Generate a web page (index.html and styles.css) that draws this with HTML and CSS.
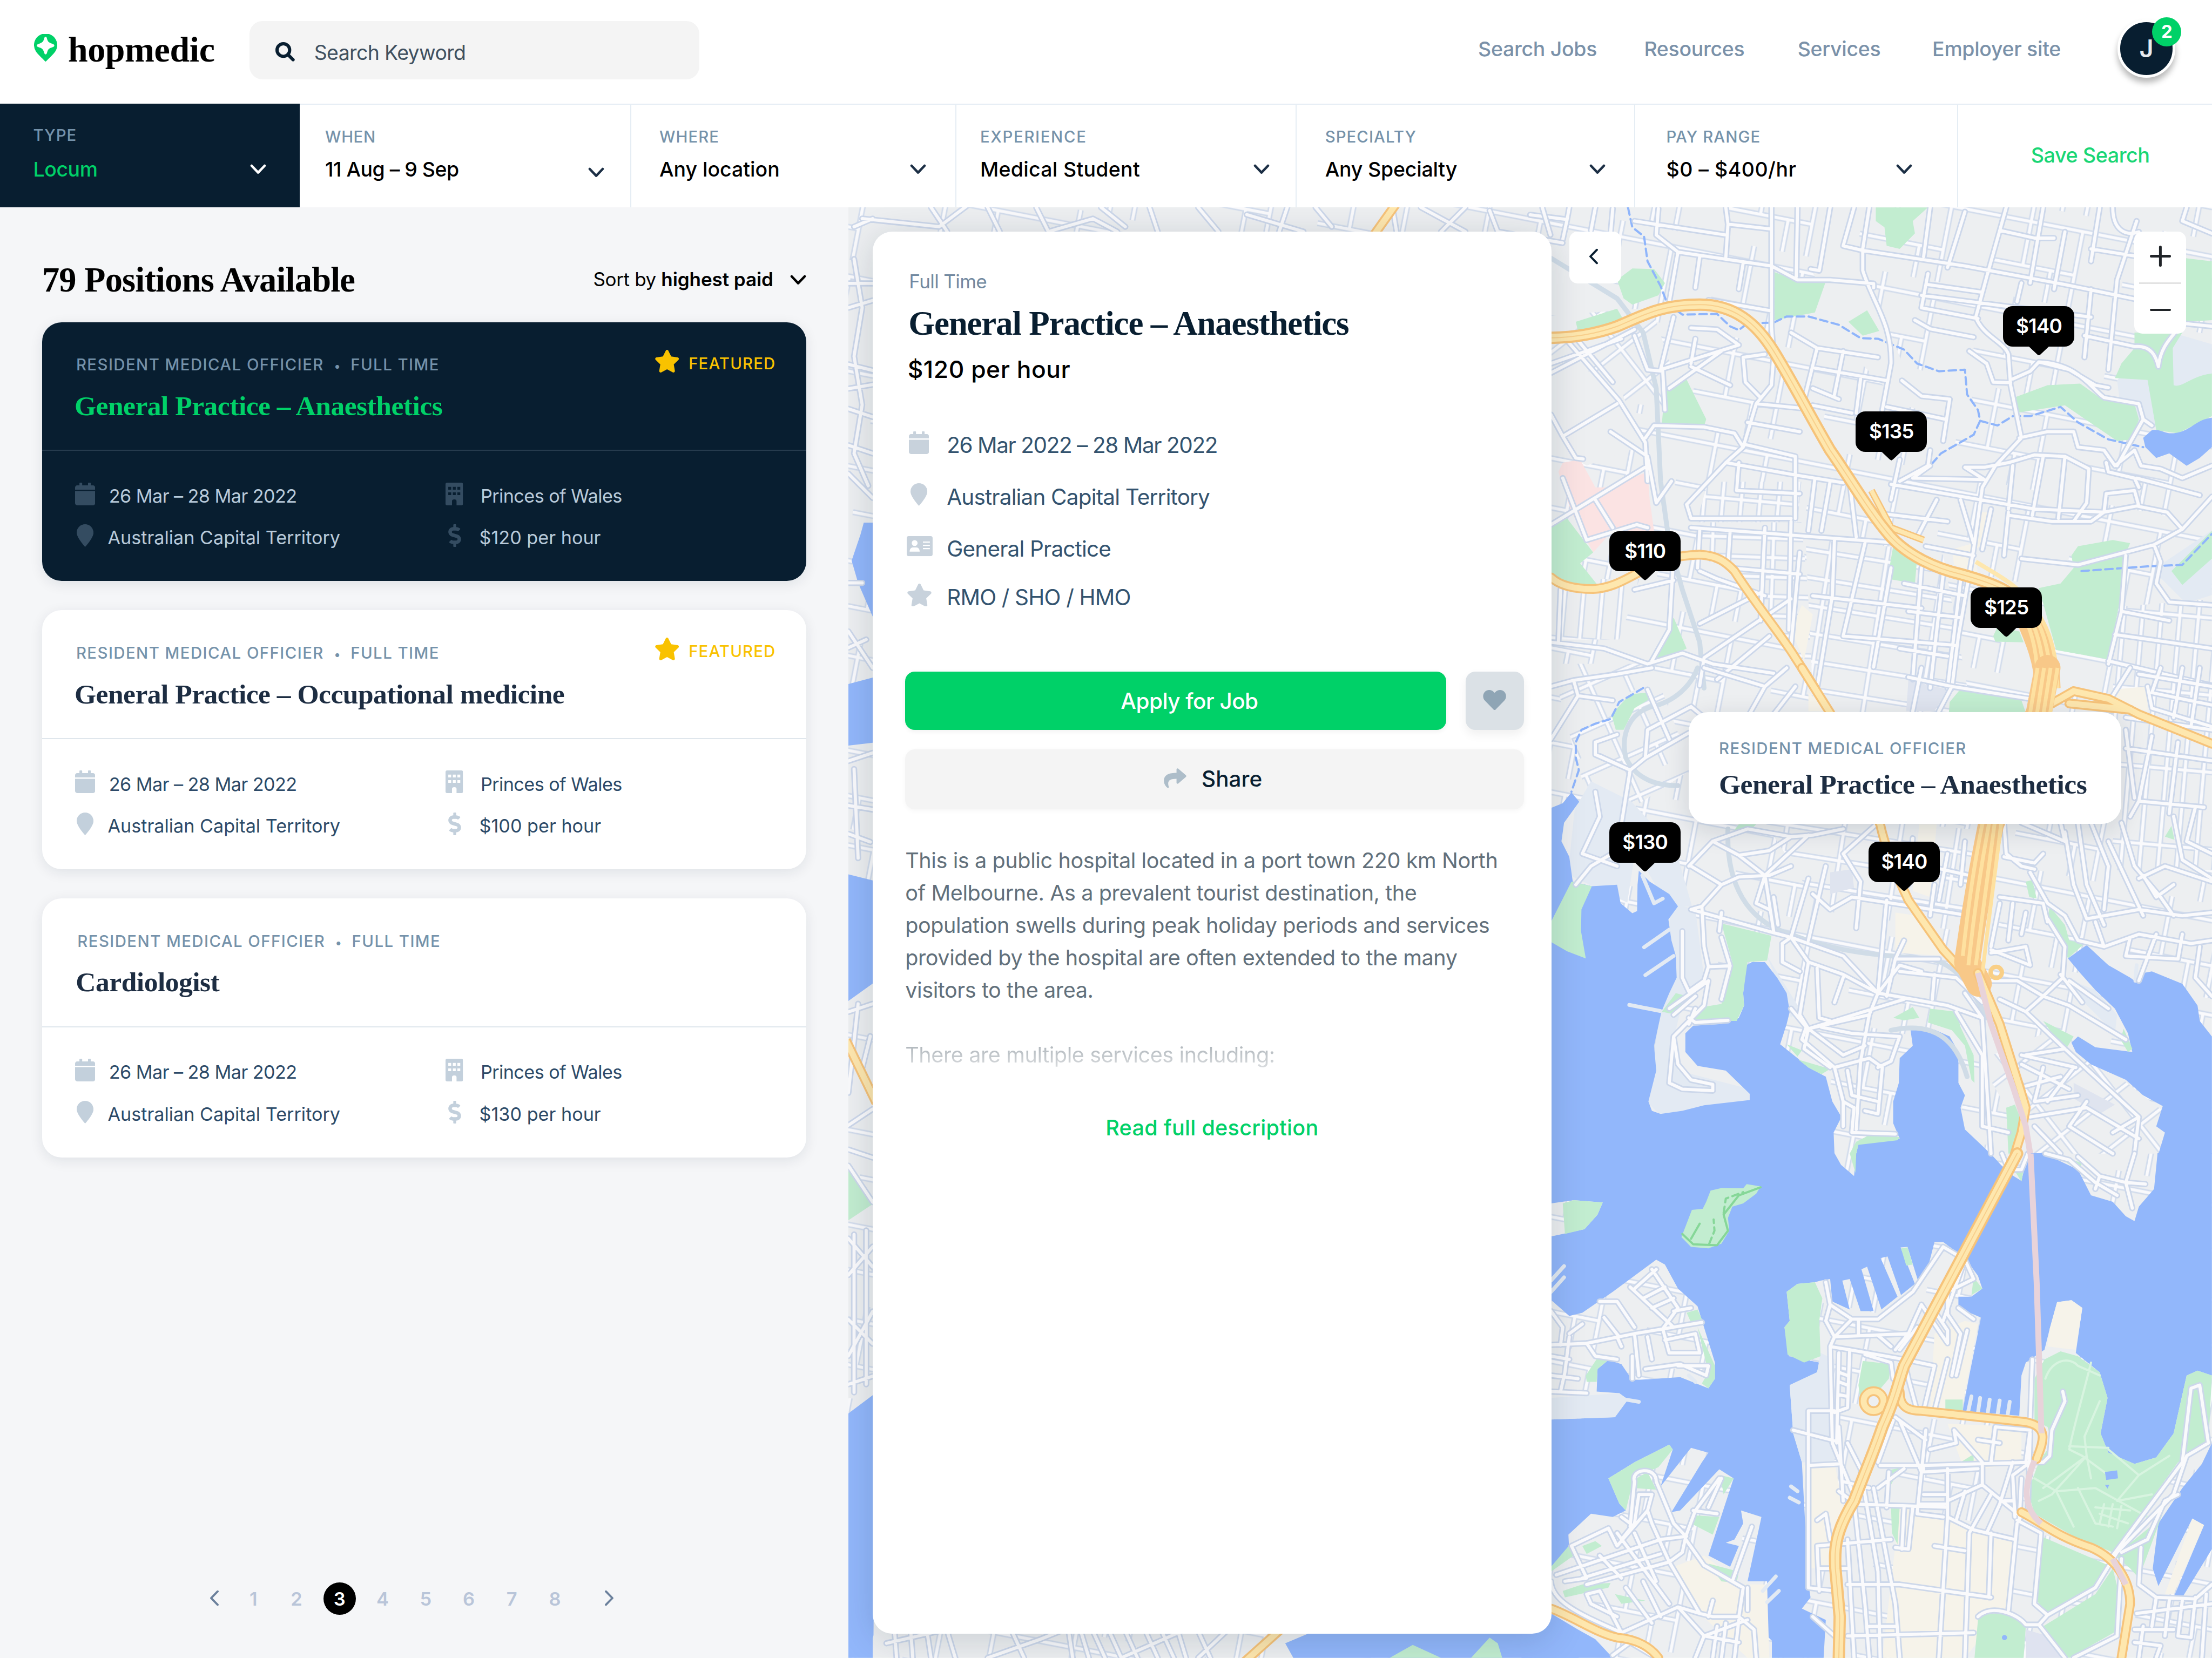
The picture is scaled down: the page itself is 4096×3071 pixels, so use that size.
FILE: index.html
```html
<!DOCTYPE html>
<html lang="en">
<head>
<meta charset="utf-8">
<title>hopmedic – Search Jobs</title>
<link rel="stylesheet" href="styles.css">
</head>
<body>
<svg class="sprite" aria-hidden="true">
  <symbol id="i-chevron" viewBox="0 0 10 6.4"><path d="M1 1l4 4.2L9 1" fill="none" stroke="currentColor" stroke-width="1.5" stroke-linecap="round" stroke-linejoin="round"/></symbol>
  <symbol id="i-left" viewBox="0 0 6 10"><path d="M5 .9L1 5l4 4.1" fill="none" stroke="currentColor" stroke-width="1.3" stroke-linecap="round" stroke-linejoin="round"/></symbol>
  <symbol id="i-right" viewBox="0 0 6 10"><path d="M1 .9L5 5 1 9.1" fill="none" stroke="currentColor" stroke-width="1.3" stroke-linecap="round" stroke-linejoin="round"/></symbol>
  <symbol id="i-calendar" viewBox="0 0 12.4 14"><path d="M0 5.2h12.4v7.5c0 .7-.6 1.3-1.3 1.3H1.3C.6 14 0 13.4 0 12.700zM0 4.300V3c0-.7.6-1.300 1.300-1.300h1.400V.4c0-.2.2-.4.400-.4h.900c.2 0 .4.200.4.400v1.300h3.600V.4c0-.2.2-.4.400-.4h.900c.2 0 .4.200.4.400v1.300h1.400c.7 0 1.300.6 1.300 1.300v1.300z" fill="currentColor"/></symbol>
  <symbol id="i-pin" viewBox="0 0 10.4 14"><path d="M5.200 14C4.700 13.500 0 8.300 0 5.200a5.200 5.200 0 0 1 10.400 0C10.400 8.300 5.700 13.500 5.200 14z" fill="currentColor"/></symbol>
  <symbol id="i-building" viewBox="0 0 10.800 14"><path fill-rule="evenodd" d="M1 0h8.800a1 1 0 0 1 1 1v12a1 1 0 0 1-1 1H6.800v-2.600a1.400 1.100 0 0 0-2.800 0V14H1a1 1 0 0 1-1-1V1a1 1 0 0 1 1-1zM1.700 2.600v1.700h1.800V2.600zm2.800 0v1.700h1.800V2.600zm2.800 0v1.700h1.800V2.600zM1.700 6v1.700h1.800V6zm2.800 0v1.700h1.800V6zm2.800 0v1.700h1.800V6z" fill="currentColor"/></symbol>
  <symbol id="i-dollar" viewBox="0 0 288 512"><path d="M209.2 233.400l-108-31.600C88.700 198.200 80 186.500 80 173.500c0-16.300 13.200-29.500 29.500-29.500h66.300c12.200 0 24.200 3.700 34.200 10.500 6.100 4.100 14.300 3.100 19.500-2l34.800-34c7.100-6.900 6.100-18.400-1.800-24.500C238 74.800 207.400 64.100 176 64V16c0-8.800-7.200-16-16-16h-32c-8.800 0-16 7.200-16 16v48h-2.500C45.800 64-5.400 118.700.5 183.600c4.200 46.100 39.400 83.600 83.800 96.600l102.500 30c12.500 3.700 21.200 15.300 21.200 28.300 0 16.300-13.200 29.500-29.500 29.500h-66.300C100 368 88 364.300 78 357.500c-6.100-4.100-14.300-3.100-19.500 2l-34.800 34c-7.100 6.900-6.100 18.400 1.800 24.500 24.500 19.200 55.100 29.900 86.500 30v48c0 8.800 7.200 16 16 16h32c8.800 0 16-7.200 16-16v-48.200c46.600-.9 90.300-28.600 105.700-72.700 21.500-61.600-14.600-124.800-72.500-141.700z" fill="currentColor"/></symbol>
  <symbol id="i-star" viewBox="20 0 536 512"><path d="M259.300 17.800L194 150.200 47.900 171.500c-26.200 3.800-36.700 36.100-17.700 54.600l105.700 103-25 145.500c-4.500 26.300 23.200 46 46.400 33.700L288 439.600l130.700 68.700c23.200 12.200 50.900-7.400 46.400-33.700l-25-145.500 105.700-103c19-18.500 8.500-50.800-17.700-54.600L382 150.200 316.700 17.800c-11.700-23.600-45.600-23.900-57.400 0z" fill="currentColor"/></symbol>
  <symbol id="i-heart" viewBox="0 32 512 448"><path d="M462.300 62.600C407.500 15.900 326 24.300 275.700 76.200L256 96.500l-19.700-20.300C186.100 24.300 104.500 15.900 49.700 62.600c-62.800 53.600-66.100 149.800-9.900 207.900l193.500 199.800c12.500 12.900 32.800 12.900 45.300 0l193.500-199.800c56.300-58.100 53-154.300-9.800-207.900z" fill="currentColor"/></symbol>
  <symbol id="i-share" viewBox="0 30 512 452"><path d="M503.700 189.800L327.700 37.900C312.300 24.500 288 35.300 288 56v80.100C127.400 137.900 0 170.100 0 322.300c0 61.500 39.600 122.300 83.300 154.200 13.700 9.900 33.100-2.600 28.100-18.700C66.100 312.800 132.900 274.300 288 272.100V360c0 20.700 24.300 31.500 39.700 18.200l176-152c11.100-9.600 11.100-26.800 0-36.400z" fill="currentColor"/></symbol>
  <symbol id="i-card" viewBox="0 0 16 12.400"><path fill-rule="evenodd" d="M1.200 0h13.600A1.200 1.200 0 0 1 16 1.200v10a1.200 1.200 0 0 1-1.200 1.200H1.200A1.200 1.200 0 0 1 0 11.200v-10A1.200 1.200 0 0 1 1.200 0zM4.900 2.500a1.800 1.800 0 1 0 0 3.600 1.800 1.800 0 0 0 0-3.600zM1.800 9.600h6.200c0-1.700-.9-2.600-2-2.600H3.800c-1.100 0-2 .9-2 2.600zM10 3.300v.8h4.300v-.8zm0 2v.8h4.300v-.8zm0 2v.8h4.300v-.8z" fill="currentColor"/></symbol>
  <symbol id="i-search" viewBox="0 0 12 12"><circle cx="4.900" cy="4.900" r="3.900" fill="none" stroke="currentColor" stroke-width="2"/><path d="M7.900 7.900l3 3" stroke="currentColor" stroke-width="2" stroke-linecap="round"/></symbol>
</svg>

<header class="top">
  <a class="brand">
    <svg class="brand-mark" viewBox="0 0 14.300 17.100"><path d="M7.150 17.100C6 15.900 2.300 12.500 1.200 10.800A7.150 7.150 0 1 1 13.100 10.800C12 12.500 8.300 15.900 7.150 17.100z" fill="#00d168"/><path d="M7.150 1.700c.5 0 .6.3.9 1.300.5 1.700 1 2.200 2.700 2.800 1.300.5 1.800.7 1.800 1.300s-.5.900-1.800 1.300c-1.600.5-2.200 1.200-2.600 2.800-.3 1.100-.5 1.400-1 1.400s-.700-.3-1-1.400C5.700 9.600 5.100 8.900 3.600 8.400 2.200 8 1.700 7.700 1.700 7.100s.6-.8 1.900-1.300C5.200 5.200 5.700 4.700 6.200 3c.3-1 .500-1.300.950-1.300z" fill="#fff"/></svg>
    <span class="brand-name">hopmedic</span>
  </a>
  <label class="search"><svg class="search-icon"><use href="#i-search"/></svg><span>Search Keyword</span></label>
  <nav class="nav"><a>Search Jobs</a><a>Resources</a><a>Services</a><a>Employer site</a></nav>
  <div class="avatar">J<span class="badge">2</span></div>
</header>

<section class="filters">
  <div class="filter active"><span class="filter-label">TYPE</span><div class="filter-value"><span>Locum</span><svg class="chev"><use href="#i-chevron"/></svg></div></div>
  <div class="filter when"><span class="filter-label">WHEN</span><div class="filter-value"><span>11 Aug – 9 Sep</span><svg class="chev"><use href="#i-chevron"/></svg></div></div>
  <div class="filter where"><span class="filter-label">WHERE</span><div class="filter-value"><span>Any location</span><svg class="chev"><use href="#i-chevron"/></svg></div></div>
  <div class="filter exp"><span class="filter-label">EXPERIENCE</span><div class="filter-value"><span>Medical Student</span><svg class="chev"><use href="#i-chevron"/></svg></div></div>
  <div class="filter spec"><span class="filter-label">SPECIALTY</span><div class="filter-value"><span>Any Specialty</span><svg class="chev"><use href="#i-chevron"/></svg></div></div>
  <div class="filter pay"><span class="filter-label">PAY RANGE</span><div class="filter-value"><span>$0 – $400/hr</span><svg class="chev"><use href="#i-chevron"/></svg></div></div>
  <a class="save">Save Search</a>
</section>

<main class="main">
  <section class="results">
    <div class="results-head">
      <h1 class="results-title">79 Positions Available</h1>
      <div class="sort"><span>Sort by <b>highest paid</b></span><svg class="chev"><use href="#i-chevron"/></svg></div>
    </div>

    <article class="job selected">
      <div class="job-top">
        <div class="job-copy"><div class="eyebrow">RESIDENT MEDICAL OFFICIER<i class="dot">•</i>FULL TIME</div><h2 class="job-title">General Practice – Anaesthetics</h2></div>
        <div class="featured"><svg class="ic-star"><use href="#i-star"/></svg><span>FEATURED</span></div>
      </div>
      <div class="job-facts">
        <svg class="ic-cal"><use href="#i-calendar"/></svg><span class="snug">26 Mar – 28 Mar 2022</span>
        <svg class="ic-build"><use href="#i-building"/></svg><span class="snug">Princes of Wales</span>
        <svg class="ic-pin"><use href="#i-pin"/></svg><span class="hang">Australian Capital Territory</span>
        <svg class="ic-dollar"><use href="#i-dollar"/></svg><span class="hang">$120 per hour</span>
      </div>
    </article>

    <article class="job">
      <div class="job-top">
        <div class="job-copy"><div class="eyebrow">RESIDENT MEDICAL OFFICIER<i class="dot">•</i>FULL TIME</div><h2 class="job-title">General Practice – Occupational medicine</h2></div>
        <div class="featured"><svg class="ic-star"><use href="#i-star"/></svg><span>FEATURED</span></div>
      </div>
      <div class="job-facts">
        <svg class="ic-cal"><use href="#i-calendar"/></svg><span class="snug">26 Mar – 28 Mar 2022</span>
        <svg class="ic-build"><use href="#i-building"/></svg><span class="snug">Princes of Wales</span>
        <svg class="ic-pin"><use href="#i-pin"/></svg><span class="hang">Australian Capital Territory</span>
        <svg class="ic-dollar"><use href="#i-dollar"/></svg><span class="hang">$100 per hour</span>
      </div>
    </article>

    <article class="job plain">
      <div class="job-top">
        <div class="job-copy"><div class="eyebrow">RESIDENT MEDICAL OFFICIER<i class="dot">•</i>FULL TIME</div><h2 class="job-title">Cardiologist</h2></div>
      </div>
      <div class="job-facts">
        <svg class="ic-cal"><use href="#i-calendar"/></svg><span class="snug">26 Mar – 28 Mar 2022</span>
        <svg class="ic-build"><use href="#i-building"/></svg><span class="snug">Princes of Wales</span>
        <svg class="ic-pin"><use href="#i-pin"/></svg><span class="hang">Australian Capital Territory</span>
        <svg class="ic-dollar"><use href="#i-dollar"/></svg><span class="hang">$130 per hour</span>
      </div>
    </article>

    <nav class="pages">
      <svg class="pg-arrow"><use href="#i-left"/></svg>
      <span>1</span><span>2</span><span class="current">3</span><span>4</span><span>5</span><span>6</span><span>7</span><span>8</span>
      <svg class="pg-arrow next"><use href="#i-right"/></svg>
    </nav>
  </section>

  <section class="map-area">
    <svg class="map" viewBox="2096 512 3368 3584" preserveAspectRatio="none">
      <defs>
        <pattern id="g-loose" width="330" height="230" patternUnits="userSpaceOnUse" patternTransform="rotate(11)">
          <rect width="330" height="230" fill="#edeff1"/>
          <g class="pc"><path d="M0 40H330M0 150H210M80 0V150M210 40V230M150 150V230"/></g><g class="pr"><path d="M0 40H330M0 150H210M80 0V150M210 40V230M150 150V230"/></g>
        </pattern>
        <pattern id="g-rows" width="150" height="48" patternUnits="userSpaceOnUse" patternTransform="rotate(2)">
          <rect width="150" height="48" fill="#edeff1"/>
          <g class="pc"><path d="M0 24H150M75 0V48"/></g><g class="pr"><path d="M0 24H150M75 0V48"/></g>
        </pattern>
        <pattern id="g-east" width="140" height="68" patternUnits="userSpaceOnUse" patternTransform="rotate(9)">
          <rect width="140" height="68" fill="#edeff1"/>
          <g class="pc"><path d="M0 30H140M60 0V68"/></g><g class="pr"><path d="M0 30H140M60 0V68"/></g>
        </pattern>
        <pattern id="g-cols" width="46" height="190" patternUnits="userSpaceOnUse" patternTransform="rotate(5)">
          <rect width="46" height="190" fill="#edeff1"/>
          <g class="pc"><path d="M23 0V190M0 95H46"/></g><g class="pr"><path d="M23 0V190M0 95H46"/></g>
        </pattern>
        <pattern id="g-diag" width="170" height="100" patternUnits="userSpaceOnUse" patternTransform="rotate(-38)">
          <rect width="170" height="100" fill="#edeff1"/>
          <g class="pc"><path d="M0 45H170M75 0V100"/></g><g class="pr"><path d="M0 45H170M75 0V100"/></g>
        </pattern>
        <pattern id="g-slope" width="190" height="100" patternUnits="userSpaceOnUse" patternTransform="rotate(-24)">
          <rect width="190" height="100" fill="#edeff1"/>
          <g class="pc"><path d="M0 42H190M50 0V100M140 42V100"/></g><g class="pr"><path d="M0 42H190M50 0V100M140 42V100"/></g>
        </pattern>
        <path id="st6" d="M48 685L75 755 105 825 122 828M75 755L200 650M0 40L85 55 90 16M85 55L75 120M150 16L140 90M190 20L185 100M295 20L290 105 340 160 555 205M240 60L450 105M450 16L455 70 550 85M455 70L450 180M555 16L555 400 560 490M340 160L320 320M390 175L380 275M490 195L480 280M410 315L555 350M555 205L615 250 690 250 790 262 790 275M615 16L612 240M690 16L665 220 645 215M745 16L720 140 765 155 1000 205 1230 265 1420 320M780 16L765 150 765 220C790 330 832 390 830 520L810 670M920 16L905 175M1000 30L960 210M1095 16L1050 240M1080 90L1160 115 1205 115M1180 16L1150 260M1230 95L1205 280M1310 16L1290 190M1290 150L1400 175 1450 190M1395 60L1350 250 1330 540M1340 16C1340 90 1370 110 1400 95M1510 16L1500 60 1568 100M915 230L900 340 1030 375M915 265L1040 290M1050 240L1025 370C1040 430 1090 450 1100 490L1105 590 1130 760 1070 850 1040 920 1020 1120 985 1400 970 1568M900 300L1290 370M1130 260L1120 320M1290 280L1275 500M885 380L920 408 1020 435M1275 430L1390 465C1430 460 1440 500 1445 530C1450 460 1480 430 1500 390L1568 400M1010 480L1050 520 1065 580 1105 582M1110 570L1150 545 1170 515 1240 540 1300 590 1330 598M1170 515C1260 520 1290 600 1320 630L1400 650 1410 700 1430 720M1410 700L1350 850M1125 760L1190 740 1250 740 1260 790 1320 800 1345 850 1390 800 1405 850 1450 860 1500 890 1568 850M1045 855L1100 840 1160 815 1230 820 1285 860 1280 970 1250 1030M1180 820L1155 1010M1230 820L1215 1020M1110 850L1100 990M1325 840L1330 870 1390 890 1400 920M1320 1000L1395 980 1465 1000 1500 1055 1568 950M1320 1000L1325 940 1390 930 1400 980M1395 890L1450 910 1540 945M1320 1000L1290 1030 1200 1030 1100 1010M1500 1055L1435 1105 1260 1170 1130 1150M1435 1105L1450 1160 1440 1230 1470 1290 1568 1300M1370 1140L1360 1320 1330 1490M1360 1320L1470 1350M1345 1395L1568 1440M1568 1560L1330 1480M48 1420L170 1440 270 1490 350 1455 420 1490 560 1520M48 1040L270 850M75 890L130 1090M130 1090L245 1040 270 1050M150 960L190 1050M185 740L270 820 290 970 325 900M48 550L240 410M48 520L210 440M75 430L205 640 265 775 270 900M110 445L190 580M240 430L270 540 305 545 310 670M300 540L480 460 430 410 370 405M265 760L285 720 400 725 470 745 490 790 450 840 360 975M320 600L440 480M370 530L460 590M330 370L300 540M380 440L370 520M490 790L520 650 630 665M500 710L620 740M490 780L610 820M540 490L490 500 495 580 530 630M560 500L555 590 520 650M600 420L660 470 800 500M660 470L630 640M720 480L700 620M655 535L820 575M650 600L710 635M760 570L750 680M650 655L740 680M855 575L900 625 965 635 950 770M820 660L955 700M450 840L610 880 720 905M610 820L610 1020M480 840L475 930 620 940M360 975L370 1020 600 1020M370 1050L850 1100M655 890L640 1060M690 900L670 1060M735 905L750 1080M830 910L1160 990 1320 1000M780 1000L960 1030M850 830L830 960M920 800L915 850 850 900M920 850L880 890 1045 895 1000 855 1045 855M935 960L890 1080M990 960L1020 1100M1060 990L1040 1120M1100 1000L1090 1140M910 1110L1020 1140M900 1180L880 1540M950 1200L920 1568M990 1220L960 1568M860 1230L1000 1270M870 1320L990 1340M700 1090L695 1270 660 1568M770 1100L720 1400M830 1180L790 1500M650 1270L900 1310M720 1400L980 1430M850 1440L960 1465M620 1130L600 1430M460 1180L620 1200M390 1060L385 1180M460 1060L455 1170M540 1050L530 1350M600 1030L595 1380M550 1400L430 1540M600 1280L400 1470 390 1560M330 1140L320 1380 280 1480M240 1250L330 1220M390 1190L430 1215 540 1270M70 1250L65 1420M530 1260L390 1360"/>
        <path id="st7" d="M48 60L100 40 110 90 190 105M100 40L200 20 280 0M110 90L48 230M270 70L320 230M160 285L230 330 265 290 365 210M230 330L200 590 140 640 105 700M230 330L150 280 150 240 200 215M265 290L270 200 370 125 400 160M150 400L160 480 120 600 200 640M400 0L540 60 500 160M540 60L590 0M610 60L560 150M365 640L420 560 500 520 600 545 650 540 720 520M420 560L480 605 550 590 600 545M480 605L540 670 640 540M370 640L440 700 480 675 550 670 600 640M440 700L395 770 370 780 560 855 600 870 720 930 800 1050 960 1090 1040 1130M395 770L400 900 410 965 460 962M440 790L435 850M440 870L460 962 440 1070M410 965L400 1010 365 1045 350 1000 350 850M540 670L560 850M540 670L520 760 550 780M560 740L570 830M640 680L600 870M680 640L640 880M600 870L640 950 720 990 800 1050 780 1120 760 1270 750 1490M640 950L620 1120 640 1165 780 1120M720 1000L700 1080M660 970L665 1130 690 1140M580 890L580 950 620 980M600 870L580 890M600 1100L635 1160 625 1200 700 1290 720 1400 745 1420M640 1165L860 1070M640 1165L720 1250 770 1220M670 1160L740 1180 850 1190 830 1270 800 1290M700 1290L780 1260 810 1290 800 1440 770 1430M730 1300L740 1380 800 1400M745 1420L740 1500 840 1505M640 1165L630 1230 690 1290M840 940L820 1060M820 750L800 1050M800 1050L850 960 900 980M850 980L980 1000 1040 1080M930 990L925 1070M740 740L880 770 1010 800M760 690L750 840M650 730L690 780 740 740M800 500L720 600 760 690M860 880L840 940 940 940M915 640L1010 670M930 700L920 800M960 600L940 750M1000 560L990 700M880 550L870 700M1080 740L1180 760 1190 820M1090 500L1095 600 1130 640 1160 650M1130 500L1230 560 1220 500M1090 610L1160 630 1180 600M1150 660L1190 760 1230 800 1260 880 1320 900 1400 860 1520 890 1568 880M1230 530L1250 700 1280 810 1400 780 1500 800 1568 790M1260 500L1280 700 1320 830M1290 500L1330 640 1320 780M1300 820L1320 900M1330 560L1370 680 1410 800M1360 500L1390 640 1450 740 1480 800M1380 480L1400 430 1550 450M1480 480L1500 620 1568 680M1400 680L1460 640 1568 690M1410 670L1440 740 1480 700M1530 450L1510 560 1568 600M1380 870L1370 930 1490 940M1440 860L1400 1010M1490 940L1500 860M1540 900L1530 1000 1568 1060M1190 810L1230 900 1225 1000 1180 1060 1120 1010 1060 1010M1080 1070L1140 1110 1180 1060 1240 1090 1370 1200M1140 1110L1230 1230 1400 1450 1390 1568M1130 1250L1255 1290M1130 1280L1240 1360M1140 1350L1220 1320M1230 1230L1140 1250M1180 1290L1160 1400 1260 1380M1250 1290L1190 1400M1150 1450L1280 1420 1400 1520M1280 1400L1240 1480 1340 1568M1160 1480L1220 1568M1400 1450L1340 1500M1060 920L1140 900 1150 960 1060 910M1080 760L1060 900M1110 760L1100 880M1140 790L1130 860M1220 990L1270 1080M1240 1010L1330 1100M320 1100L410 1010 400 1090 330 1190 320 1340 350 1360 420 1365 420 1345 370 1330 340 1280 330 1190M380 1060L330 1120M365 1150L380 1100M365 1130L380 1145 455 1138M1000 1050L1040 1130 1060 1568M980 1110L1040 1250 1040 1480 1100 1500M1370 160L1568 200M1380 0L1340 90M1420 60L1430 130 1568 190M1450 0L1430 80 1568 120M1500 0L1480 160M1540 0L1520 190M1568 60L1400 20M1370 260L1568 300M1370 200L1390 420M1430 220L1400 430M1490 240L1470 470M720 1400L720 1480M900 0L880 140M970 60L940 140M870 30L970 60 1150 100"/>
        <path id="st8" d="M48 595L130 590 240 560 395 525M240 560L250 690M160 460L200 460 240 540M230 415L330 540 305 545 340 480 300 400 280 360M240 420L290 360M260 450L310 415M280 480L330 450M305 545L320 620 390 620 380 560 310 580M330 490L370 480M130 590L150 630 200 640M90 570L80 680 70 740M48 630L90 640M48 690L110 700M48 740L130 745M270 570L280 640M265 670L345 655 405 690M405 690L410 660 340 660M200 570L210 600M90 560L120 530M170 510L205 570M235 700L235 630M48 490L75 540 70 595M230 1150L210 1130M230 1160L240 1020C230 980 290 970 290 1020L330 1150 358 1190 380 1110 435 1010M358 1190L350 1240 320 1270 280 1150 270 1110 280 1060 250 1060 240 1150 210 1200M95 1220L180 1165 200 1220 270 1110M95 1220L130 1320 80 1330M60 1310L300 1200 360 1190M120 1320L300 1245M130 1340L320 1270M200 1180L320 1400M160 1250L210 1320M240 1180L290 1330M358 1200L400 1280 490 1350 480 1440M320 1270L390 1430 420 1440 480 1440 515 1480 520 1568M210 1490L340 1410 390 1430M210 1490L160 1360 130 1370 140 1400 200 1440M220 1350L280 1460M260 1330L300 1440M340 1410L400 1500M400 1500L380 1568M420 1390L410 1440M510 1160L465 1330M48 1330C50 1400 130 1440 210 1490M400 1500L500 1450M430 1470L420 1568M450 1460L440 1568M480 1450L470 1568M400 1500L480 1520M500 1350L500 1420M190 1560L230 1520 280 1560M375 1110L430 1120M440 1010L410 1100M680 400L690 470 680 520 700 570 690 600M690 470L740 515 800 515 880 430 950 290 1000 330 1020 390 960 430 930 500M740 515L700 570 870 560 900 470M755 515L755 565M800 565L830 600M690 600L735 610 860 640 930 660 905 800M690 600L695 900 750 1080M710 620L705 900M735 610L730 790 700 805M710 680L730 690M710 710L730 720M710 750L730 755M770 625L830 650 835 700M860 640L870 700 890 800M870 560L840 610M900 470L960 590 960 550 935 500M960 430L960 500 990 560 970 690M1000 330L950 520M1005 550L980 690M985 480L1020 515M960 640L930 800M890 540L850 610M640 800L700 800M640 800L640 1350 700 1360M605 860L705 895M640 970L710 965M710 850L720 1080M720 1020L780 1040M660 1140L680 1120 690 1200M660 1220L830 1200M665 1290L730 1290M660 1220L665 1360M730 900L760 980 800 1300 805 1568M710 1050L750 1090 960 1100M745 1080L770 1400 780 1568M730 1200L745 1568M790 1040L840 1400 850 1568M840 820L910 890M910 860L890 1120 950 1130M905 970L1150 960M805 970L905 970 905 990 1030 980M800 1040L860 980M825 990L820 1100M905 1060L960 1060M960 980L960 1130 940 1568M895 1090L960 1090M960 1080L1040 1030 1130 1130M1000 1050L980 1140M1040 1030L1040 960 975 860 980 900 920 920M1060 1060L1010 1180 1000 1568M1080 1090L1050 1180M960 1130L1020 1170 1115 1200M1110 960L1080 1090M1090 1080L1110 1080M1150 860L1070 850 1060 960M1150 860L1140 960M1030 890L1080 900M1150 960L1110 1000 1115 1130M730 1340L850 1340 1060 1380M730 1500L1020 1490M650 1440L700 1500M1120 1150L1100 1420M860 1100L855 1230M880 1100L870 1230 840 1225M930 1220L1000 1235M835 830L800 960M850 830L900 990M780 1470L840 1470M1060 1180L1055 1380M1150 870L1145 1100M1030 1440C1060 1400 1120 1430 1140 1465L1170 1465 1190 1435 1160 1400 1175 1180 1120 1140M1190 1435L1300 1350 1350 1240 1480 1060 1510 940 1560 900 1540 720 1520 730 1500 960 1340 1250M1170 1465L1230 1568M1360 1260L1350 1500 1250 1568M1360 1240L1420 1200 1460 1080 1490 1060M1405 1225L1400 1340 1440 1380 1530 1385 1568 1340M1395 1430L1568 1400M1390 1480L1480 1480M1390 1520L1450 1530 1440 1568M1440 1380L1430 1470M1470 1390L1460 1500M1500 1390L1490 1500 1520 1505 1530 1380M1555 1370L1545 1568M1400 1568L1410 1470M1150 1000L1145 960 1180 960M1225 740L1230 770 1200 860 1195 940 1180 960M1150 830L1155 640M1130 1010L1125 1140M1185 0L1240 20 1300 90 1350 130M1260 10L1310 70 1370 90 1415 95M1390 0L1370 90 1385 170M1310 70L1300 110M1085 0L1100 50 1130 50 1145 0"/>
        <path id="stL" d="M2110 560L2156 540M2096 700H2156M2096 760L2156 742M2096 900L2156 915M2096 960L2156 950M2096 1010L2156 1030M2110 640L2130 760 2110 880 2130 1000 2110 1120 2145 1200M2096 1100L2156 1120M2096 1170L2156 1230M2096 1440H2130M2096 1600L2140 1580M2096 1560L2156 1650M2096 1880L2156 1860M2110 1900L2120 2120M2096 1990L2156 2000M2096 2060L2150 2080M2096 2500L2156 2480M2120 2480L2096 2700M2150 2560L2130 2640M2096 2780L2156 2740M2096 2840L2156 2860M2096 2880L2156 2970M2096 3060L2156 3130M2096 3150L2156 3080M2110 3050V3440M2140 3040V3420M2096 3260L2156 3320M2096 3350L2156 3240M2096 3420L2156 3400M2130 540L2320 560 2400 500M2300 512L2340 572M2440 512L2470 572M2560 512L2590 572 2700 540 2760 572M2720 512L2780 560M2840 512L2860 572M2960 512L3010 572M3080 530L3220 572M3180 512L3160 572M3250 512L3290 560M3440 512L3450 572M3510 512L3620 572M3620 512L3560 572M3680 520L3700 572 3860 600M3810 512L3830 580M2190 4060L2320 4030M2210 4030L2215 4096M2250 4030L2255 4096M2290 4030L2300 4096M2340 4030L2360 4096M2500 4030L2530 4096M2440 4096L2570 4050 2620 4030M2640 4030L2650 4096M2670 4030L2690 4096M2700 4030L2730 4096M2740 4030L2770 4096M2780 4030L2810 4096M2830 4030L2860 4096M2870 4030L2900 4096M2910 4030L2930 4096M2960 4030L2990 4096M3030 4030L2960 4096M2770 4096L2920 4030"/>
        <path id="hw6" d="M48 437C100 436 150 425 200 400C260 365 300 330 390 330C470 330 520 390 560 480C600 570 640 680 690 800C740 900 780 1000 830 1080C870 1140 930 1180 990 1200C1080 1235 1120 1260 1150 1340C1170 1400 1180 1480 1180 1568"/>
        <path id="hw6b" d="M48 1210C70 1240 110 1248 145 1248C190 1245 220 1215 250 1195C300 1150 340 1140 390 1137C430 1140 450 1160 470 1190C520 1300 580 1400 610 1470L655 1568"/>
        <path id="hw7" d="M625 0L690 145 805 505C815 570 840 660 870 750L950 910 1035 1040"/>
        <path id="hw7b" d="M1190 0L1170 145 1060 505C1040 640 1020 800 1005 950L1032 1020"/>
        <path id="hw7c" d="M1200 115L1250 75 1330 100 1400 150 1568 245M1240 115L1380 135"/>
        <path id="hw7d" d="M1030 985L1080 1150 1125 1350 1140 1420 1130 1500 1115 1568"/>
        <path id="hw8" d="M1120 0L990 330 860 660C845 720 840 760 810 850C790 930 770 990 745 1080C700 1180 700 1230 702 1290L712 1440 710 1568"/>
        <path id="hw8b" d="M850 740C850 790 870 800 900 800L1140 835C1200 850 1175 910 1165 950M1130 1115C1180 1150 1210 1190 1290 1225C1350 1260 1380 1330 1380 1400L1360 1568"/>
        <path id="hw8c" d="M48 1415C100 1440 150 1490 200 1505C250 1510 280 1540 295 1568"/>
      </defs>

      <rect x="2096" y="512" width="3368" height="3584" fill="url(#g-loose)"/>
      <path fill="url(#g-rows)" d="M4190 1290L4450 1290 4470 1500 4680 1400 4700 1900 4520 1920 4480 1700 4280 1400 4190 1380z"/>
      <path fill="url(#g-cols)" d="M4220 1190H4450L4440 1290H4190zM3832 1430L4050 1430 4000 1580H3832zM5220 1500L5464 1480V2150H5220z"/>
      <path fill="url(#g-east)" d="M4460 1320L4800 1370 4860 1700 4820 1760H4480zM4340 2000L4880 2050 4840 2300 4500 2250z"/>
      <path fill="url(#g-diag)" d="M4890 2620L5080 2540 5350 2750 5340 2850H5020zM3832 780L4080 760 4180 1060 4060 1000 3832 980z"/>
      <path fill="url(#g-slope)" d="M3832 1640L4080 1640 4180 1900 3950 2050 3900 1900z"/>
      <path fill="#edeff1" d="M3832 900L3990 930 4060 1100 3920 1150 3832 1100zM4460 640H4600L4700 900 4860 950 4900 1060 4700 1000 4600 900z"/>
      <path fill="#e3eaf3" d="M3873 2160L3890 2000 3930 1930 4030 1980 4140 2100 4180 2240 4120 2240 4040 2100 4020 2230z"/>
      <path fill="#e3eaf3" d="M5230 940L5300 850 5360 820 5464 850V950L5340 1060 5240 1020zM5330 1400L5464 1310V1470L5400 1490 5330 1420z"/>

      <g transform="matrix(1.07398 0 0 .765306 3780 500)">
        <path fill="#fbe3e3" d="M65 870L75 840 115 830 150 920 175 920 270 870 275 960 285 1060 180 1075 145 1130 95 1000z"/>
        <path fill="#f6f3ea" d="M970 1120L1020 1100 1030 1200 975 1170zM600 1380L625 1300 650 1330 630 1480zM1030 1000L1055 1000 1050 1090 1025 1120z"/>
        <path class="park" d="M200 250L235 213 285 215 310 260 295 300 235 330 215 310zM105 385L200 343 215 380 110 415zM562 225L615 252 680 255 655 355 562 380zM732 385L775 348 803 415 765 430zM310 605L360 572 405 700 400 722 303 712zM48 1050L85 1020 145 1130 115 1165 155 1235 130 1250 48 1210zM1113 630L1190 590 1265 585 1320 640 1390 650 1400 700 1385 765 1350 770 1230 655 1115 680zM1360 520L1345 567 1420 573 1440 735 1490 745 1568 690 1568 552C1520 560 1500 600 1480 590L1478 470 1500 420H1390V470zM1508 180L1568 190V380L1508 385zM835 1110L890 1150 885 1230 822 1215zM1245 1140L1260 1110 1340 1090 1380 1100 1365 1150 1365 1200 1360 1260 1330 1475 1210 1445 1170 1245 1220 1230 1250 1180zM1065 1400L1075 1370 1125 1385 1135 1420 1070 1418zM1475 1190L1568 1060V1150L1500 1235zM285 1480L330 1340 360 1440 330 1460zM795 16L915 16 880 60 885 100 850 150 820 140 815 80 795 60z"/>
        <path class="water" d="M1568 695C1530 700 1520 740 1480 745C1460 748 1450 730 1430 735L1410 760 1415 790 1440 825 1470 810 1490 830 1510 850 1540 825 1568 790z"/>
        <path class="trail" d="M225 16L235 80 262 110 270 190 300 270 315 325 350 362 430 360 460 400 480 412 500 390 560 388 590 368 640 368 710 395 760 438 800 440 860 475 890 520 940 545 1000 540 1005 620 1030 670 1035 705 1020 750 945 810 920 850M1035 705L1075 720 1110 690 1150 690 1220 660 1260 710 1330 765 1410 790M1268 1190L1420 1175 1500 1170 1568 1070"/>
        <path class="rail" d="M48 180L130 250 200 310 260 420 290 600 300 900 320 1100 350 1250 390 1420 400 1568"/>
      </g>

      <g transform="matrix(1.07398 0 0 .765306 3780 1650)">
        <path fill="#e3eaf3" d="M325 760L380 780 400 1000 350 1080 330 1200 340 1300 505 1360V1400L300 1445 268 1400 300 1100zM545 930L620 1100 600 1130zM1210 990L1300 1040 1350 1120 1345 1180z"/>
        <path fill="#dfe4ef" d="M870 40L960 70 930 140H865zM690 660L740 650 745 710 690 730zM1250 1340L1345 1410 1310 1440 1250 1390z"/>
        <path fill="#f6f3ea" d="M640 80L690 140H640zM895 505H935L920 740 880 720zM840 790L890 800 960 930 840 920zM1340 70L1420 60 1420 140 1350 110z"/>
        <path class="water" d="M48 452L75 437 95 402 113 432 78 500 72 560 90 610 98 690 142 705 200 700 208 760 235 792 246 785 247 700 250 655 275 690 320 730 340 770 318 812 325 880 335 930 337 1000 320 1050 302 1110 285 1220 290 1300 272 1400 280 1430 300 1440 350 1430 400 1412 505 1395 505 1375 450 1300 385 1285 357 1240 357 1180 375 1155 440 1150 480 1130 492 1090 490 1050 497 960 510 950 540 950 568 1000 590 1050 597 1110 590 1150 575 1215 615 1260 640 1290 680 1320 695 1400 716 1450 698 1500 700 1570H48zM750 1570L755 1535 850 1520 835 1470 835 1400 848 1340 850 1260 880 1220 875 1170 930 1168 965 1190 985 1240 985 1340 1000 1380 990 1420 1000 1490 1030 1530 1060 1570zM1237 938L1280 895 1330 960 1380 1000 1395 1015 1410 985 1430 980 1500 1020 1535 1090 1540 1140 1568 1190V1570H1445L1460 1500 1440 1480 1455 1415 1410 1380 1370 1330 1290 1280 1255 1240 1245 1210 1260 1190 1300 1225 1385 1240 1375 1180 1345 1100 1300 1040 1265 985z"/>
        <path class="pier" d="M320 845L262 902M330 930L265 992M228 1088L300 1108M258 670L285 760 305 745M1395 960L1392 1010"/>
        <path class="park" d="M48 820L95 690 142 705 118 780 117 850 128 938 85 915 48 885zM187 150L230 85 270 80 275 100 240 130 215 200 197 200zM440 825L555 865 545 945 500 950 490 1050 492 1090 475 1140 365 1140 375 1100 440 1085 465 950zM335 1050L362 1060 330 1118 303 1110zM965 110L990 68 1060 75 1130 105 1140 145H963zM1195 770L1230 830 1240 880 1275 890 1237 938 1225 890 1190 810zM835 1130L880 1095 895 1130 860 1138zM920 1100L980 1110 990 1160 1020 1250 1022 1340 1015 1330 1000 1220 970 1170 915 1145zM1180 1140L1250 1190 1235 1225 1210 1200zM1365 1165L1385 1230 1375 1240 1358 1200zM617 1265L690 1295 670 1312 640 1290zM750 1530L785 1505 850 1515 845 1525 755 1540 750 1568H735zM1095 1420L1115 1410 1135 1480 1120 1568H1100zM466 530L480 505H520L505 525zM1140 690L1155 685 1165 745 1148 740zM1460 545L1475 510 1482 555zM590 1215L625 1235 615 1255z"/>
        <path class="trail" d="M260 65L230 90 205 110 185 165 150 180 118 200 105 240 105 290 112 330 95 400"/>
        <path class="rail" d="M385 0C370 60 330 110 280 125C220 150 210 230 220 290C240 350 280 380 340 380M455 520C450 700 500 820 600 860C720 930 850 930 920 940C990 960 1020 1050 1050 1130M830 1170C930 1140 980 1200 1005 1320"/>
      </g>

      <g transform="matrix(1.07398 0 0 .79464 3780 2850)">
        <path class="water" fill-rule="evenodd" d="M-20 -1H1568V1568H-20z
          M700 -1L715 35 745 70 750 -1z M1058 -1L1100 60 1130 85 1145 -1z M1180 -1L1260 50 1290 130 1340 150 1370 195 1390 210 1400 165 1435 110 1443 -1z
          M48 455L90 505 120 495 190 430 290 330 310 345 340 420 385 475 425 650 425 700 410 730 345 695 235 705 210 655 180 642 155 670 153 740 205 745 225 765 195 820 48 827z
          M48 155L100 145 167 152 155 190 125 235 48 258z
          M48 1285L90 1240 88 1185 140 1120 190 1130 220 1110 205 1088 180 1010 240 960 320 905 328 920 300 1035 370 915 410 930 395 960 325 1115 345 1110 435 982 468 1010 410 1250 460 1285 480 1220 450 1210 470 1200 490 1150 485 1110 532 1130 500 1330 545 1330 545 1500 556 1515V1568H190L150 1510 110 1480 48 1430z
          M590 430L615 405 655 400 668 395 690 390 695 460 735 485 718 395 735 390 760 490 790 490 762 360 775 352 808 485 845 445 806 325 822 320 853 440 885 405 852 292 868 290 892 395 910 380 930 275 950 275 1000 325 1030 380 1040 420 1015 445 985 445 985 480 1037 510 1010 690 995 800 1125 815 1130 690 1140 650 1183 610 1195 545 1212 462 1245 456 1270 480 1255 620 1310 680 1328 760 1312 870 1330 930 1390 965 1440 945 1480 870 1510 690 1535 675 1568 690V900L1545 965 1500 1040 1445 1150 1432 1290 1445 1345 1523 1135 1550 1155 1480 1380 1500 1380 1568 1230V1568H675L680 1450 625 1415 645 1380 640 1340 625 960 605 870 597 720 660 680 665 650 595 630 585 540 597 520z"/>
        <path fill="#e3eaf3" d="M48 760L205 745 225 765 195 820 48 827zM597 720L660 680 668 620 700 640V960H625L605 870z"/>
        <path fill="#f6f3ea" d="M1195 545L1212 462 1245 456 1270 480 1255 610 1190 600zM930 560L1000 520 1030 530 995 780 920 800zM630 970L700 960 720 1100 690 1290H640zM850 1100L960 1130 1115 1200 1100 1400 1000 1568H810zM960 840L1130 850V960L1000 990zM320 1290L400 1250 490 1340 545 1340 550 1568H500L390 1430zM1523 1135L1550 1155 1480 1370 1460 1370z"/>
        <path fill="#dfe3f0" d="M1140 1480L1190 1500 1230 1568H1140zM1160 980L1200 950 1235 960 1225 1010z"/>
        <path class="park" d="M405 150L415 115 440 107 490 108 498 95 530 102 520 125 490 155 465 165 455 200 458 240 440 280 410 295 370 290 348 260 355 235 372 175 397 172zM75 155L100 145 167 152 155 190 125 235 80 250zM590 430L615 405 655 400 672 450 665 520 668 630 630 650 592 625 585 540 597 520zM755 720L765 645 830 655 825 700 800 740 760 770zM385 540L425 660V700L410 730 395 715 410 680zM360 495L385 485 395 515 370 525zM128 690L155 635 180 642 155 670 153 710H130zM180 1010L240 960 320 905 328 920 295 975 270 990 240 1000 220 1110 205 1088zM270 990L290 1045 240 1040 245 1010zM370 1150L380 1125 435 1130 420 1185zM48 1285L95 1210 100 1250 48 1300zM75 1360L120 1340 185 1335 180 1350 80 1380zM410 1275L480 1300 475 1335 440 1330zM437 1000L468 1010 445 1060zM1183 640L1220 615 1260 630 1310 680 1328 760 1312 870 1330 930 1390 965 1440 945 1480 870 1510 690 1535 675 1568 690 1560 900 1490 960 1340 1240 1250 1190 1160 1120 1145 1050 1170 960 1200 900 1190 850 1160 830 1160 700zM1175 1190L1330 1280 1300 1350 1190 1430 1165 1390zM1180 1470L1300 1370 1340 1290 1360 1400 1355 1480 1240 1568 1220 1560zM1030 1450C1040 1420 1130 1420 1140 1470L1135 1568H1022zM1380 1290L1345 1250 1445 1140 1460 1100 1400 1320zM853 295L868 292 880 345 865 348zM1020 385L1040 420 1015 440zM955 765H995L995 805 955 795zM830 1098H850L845 1215 832 1180zM990 960L1020 935 1020 970 1000 975zM820 985L850 978 830 1030zM1115 55L1135 50 1130 87zM1200 -1L1270 30 1260 50zM735 -1H750L748 60zM120 1220L150 1205 165 1220 130 1245zM195 1370L265 1390 210 1400z"/>
        <path class="paths" d="M1185 700C1200 640 1240 630 1260 660L1310 690M1290 650C1270 760 1250 850 1240 920L1270 940 1330 1000M1310 770L1275 880 1280 940 1200 1060 1170 1080M1240 910L1330 915M1160 1010L1210 1050 1250 1160M1210 1050L1300 1040 1420 1130M1330 920L1400 1000 1470 940M1260 1040L1300 1150 1340 1160M1400 1000L1350 1080 1430 1060M1300 1100L1380 1110M1310 1120L1375 1150M1320 1090L1310 1150M1340 1090L1330 1160M1360 1095L1350 1165M1180 1040L1280 940 1290 1010"/>
        <path class="islet" d="M350 250L375 282 430 285 455 240 445 190 480 130 530 105M370 265L390 218"/>
        <path class="islet dashed" d="M412 280L424 240 422 205M445 185L450 140 490 120"/>
        <path class="water" d="M1322 990L1350 985 1352 1010 1325 1015zM1322 1030L1332 1030 1328 1042zM1085 1505a6 8 0 1 0 12 0a6 8 0 1 0 -12 0z"/>
        <path class="pier" d="M1015 755L1007 805M1035 760L1030 805M1057 765L1052 810M1080 768L1075 812M1103 772L1098 815M48 395L78 350M48 430L78 385M600 1035L615 1050M597 1070L618 1085M535 1360L565 1315M545 1395L572 1360M365 690L380 710M220 765L250 772"/>
      </g>

      <path class="water" d="M2156 1291H2134L2126 1320 2104 1385 2120 1440 2156 1523zM2096 1690L2156 1674V1835L2096 1842zM2096 2160L2156 2175V2430L2096 2473zM2096 3492L2156 3447V4096H2096zM2156 3447H2162L2158 4040 2142 4096H2120zM3232 4036H3870L3900 4096H3195L3175 4060z"/>
      <path class="park" d="M2096 2885L2156 2975 2096 3015zM3433 4096L3490 4064 3560 4096zM3634 4096L3680 4046 3700 4060 3711 4096z"/>

      <g class="streets">
        <g transform="matrix(1.07398 0 0 .765306 3780 500)"><use href="#st6" class="casing"/><use href="#st6" class="road"/></g>
        <g transform="matrix(1.07398 0 0 .765306 3780 1650)"><use href="#st7" class="casing"/><use href="#st7" class="road"/></g>
        <g transform="matrix(1.07398 0 0 .79464 3780 2850)"><use href="#st8" class="casing"/><use href="#st8" class="road"/></g>
        <use href="#stL" class="casing"/><use href="#stL" class="road"/>
      </g>
      <g class="highways">
        <g transform="matrix(1.07398 0 0 .765306 3780 500)"><path class="h-edge slim" d="M785 930L830 1050 905 1090"/><path class="h-fill slim" d="M1025 1160C1060 1190 1100 1220 1130 1260C1180 1340 1200 1400 1215 1568M785 930L830 1050 905 1090"/><use href="#hw6b" class="h-edge"/><use href="#hw6b" class="h-fill"/><use href="#hw6" class="h-edge wide"/><use href="#hw6" class="h-fill wide"/><use href="#hw6" class="h-mid"/><path class="h-edge broad" d="M1145 1335C1165 1400 1190 1480 1190 1568"/><path class="h-lanes" d="M1135 1335C1160 1400 1168 1480 1167 1568M1148 1335C1172 1400 1182 1480 1182 1568M1160 1335C1188 1400 1197 1480 1197 1568M1172 1335C1202 1400 1212 1480 1213 1568"/></g>
        <g transform="matrix(1.07398 0 0 .765306 3780 1650)"><use href="#hw7c" class="h-edge"/><use href="#hw7c" class="h-fill"/><use href="#hw7" class="h-edge"/><use href="#hw7" class="h-fill"/><use href="#hw7b" class="h-edge huge"/><path class="h-lanes" d="M1167 0L1150 145 1040 505C1020 640 1005 800 995 930M1182 0L1166 145 1055 505C1037 640 1020 800 1008 960M1197 0L1181 145 1068 505C1055 640 1040 800 1025 960M1213 0L1196 145 1083 505C1072 640 1055 800 1040 990"/><use href="#hw7d" class="h-edge"/><use href="#hw7d" class="h-fill"/><ellipse cx="1072" cy="983" rx="13" ry="18" class="h-ring"/><path class="tunnel" d="M1030 985L1060 1150 1110 1350 1140 1480 1150 1568"/></g>
        <g transform="matrix(1.07398 0 0 .79464 3780 2850)"><ellipse cx="790" cy="770" rx="23" ry="31" class="h-edge"/><ellipse cx="790" cy="770" rx="23" ry="31" class="h-fill"/><use href="#hw8b" class="h-edge"/><use href="#hw8b" class="h-fill"/><use href="#hw8c" class="h-edge"/><use href="#hw8c" class="h-fill"/><use href="#hw8" class="h-edge wide"/><use href="#hw8" class="h-fill wide"/><use href="#hw8" class="h-mid"/><path class="tunnel" d="M1151 0L1165 400 1176 870M1160 955C1130 1050 1140 1110 1175 1150M1340 1260L1370 1340"/></g>
        <path class="h-edge" d="M2090 2570L2165 2725M3170 4020L3070 4110M3480 460L3380 600"/><path class="h-fill" d="M2090 2570L2165 2725M3170 4020L3070 4110M3480 460L3380 600"/>
      </g>
    </svg>

    <aside class="detail">
      <div class="d-type">Full Time</div>
      <h2 class="d-title">General Practice – Anaesthetics</h2>
      <div class="d-pay">$120 per hour</div>
      <ul class="d-facts">
        <li><svg class="ic-cal"><use href="#i-calendar"/></svg><span class="snug">26 Mar 2022 – 28 Mar 2022</span></li>
        <li><svg class="ic-pin"><use href="#i-pin"/></svg><span>Australian Capital Territory</span></li>
        <li><svg class="ic-card"><use href="#i-card"/></svg><span>General Practice</span></li>
        <li class="tight"><svg class="ic-star"><use href="#i-star"/></svg><span>RMO / SHO / HMO</span></li>
      </ul>
      <div class="d-actions">
        <a class="btn apply">Apply for Job</a>
        <a class="btn fav"><svg class="ic-heart"><use href="#i-heart"/></svg></a>
        <a class="btn share"><svg class="ic-share"><use href="#i-share"/></svg><span>Share</span></a>
      </div>
      <div class="d-text">
        <p>This is a public hospital located in a port town 220 km North<br>of Melbourne. As a prevalent tourist destination, the<br>population swells during peak holiday periods and services<br>provided by the hospital are often extended to the many<br>visitors to the area.</p>
        <p class="fade">There are multiple services including:</p>
      </div>
      <a class="d-more">Read full description</a>
    </aside>

    <button class="collapse"><svg><use href="#i-left"/></svg></button>
    <div class="zoomer"><span class="plus"></span><span class="minus"></span></div>

    <span class="pin" style="left:71.310rem;top:6.110rem">$140</span>
    <span class="pin" style="left:62.200rem;top:12.600rem">$135</span>
    <span class="pin" style="left:46.990rem;top:20rem">$110</span>
    <span class="pin" style="left:69.300rem;top:23.500rem">$125</span>
    <span class="pin" style="left:46.990rem;top:38rem">$130</span>
    <span class="pin" style="left:62.990rem;top:39.200rem">$140</span>
    <div class="tip"><div class="eyebrow">RESIDENT MEDICAL OFFICIER</div><h3 class="job-title">General Practice – Anaesthetics</h3></div>
  </section>
</main>
</body>
</html>
```
FILE: styles.css
```css
/* 1rem = 10 layout pixels on a 1366px-wide canvas */
html { font-size: calc(100vw / 136.6); overflow: hidden; }
* { box-sizing: border-box; margin: 0; padding: 0; }
body { width: 136.6rem; height: 102.4rem; font-family: Inter, "Liberation Sans", sans-serif; font-weight: 400; color: #081e30; background: #fff; display: flex; flex-direction: column; white-space: nowrap; overflow: hidden; }
.sprite { position: absolute; width: 0; height: 0; }
svg { display: block; flex: none; }
h1, h2, h3, .brand-name { font-family: "Liberation Serif", serif; font-weight: 700; }

.top { height: 6.4rem; display: flex; align-items: flex-start; }
.brand { display: flex; padding: 2.1rem 0 0 2.1rem; width: 15.4rem; }
.brand-mark { width: 1.430rem; height: 1.710rem; }
.brand-name { font-size: 2.200rem; line-height: 2.400rem; margin: -.22rem 0 0 .67rem; color: #000; letter-spacing: -.006em; }
.search { margin-top: 1.3rem; width: 27.800rem; height: 3.600rem; background: #f4f4f4; border-radius: .8rem; display: flex; align-items: center; padding: .3rem 0 0 1.600rem; color: #3f5060; font-size: 1.250rem; letter-spacing: -.017em; }
.search-icon { width: 1.200rem; height: 1.200rem; margin: -.1rem 1.200rem 0 0; color: #081e30; }
.nav { margin-left: 48.080rem; padding-top: 2.150rem; line-height: 1.800rem; display: grid; grid-template-columns: 10.250rem 9.480rem 8.320rem 11.420rem; font-size: 1.250rem; font-weight: 500; letter-spacing: -.008em; color: #7a91a9; }
.avatar { position: relative; width: 3.600rem; height: 3.600rem; margin-top: 1.200rem; border: .2rem solid #fff; border-radius: 50%; background: #081e30; box-shadow: 0 .3rem .4rem rgba(0,0,0,.28); color: #e8ebee; font-size: 1.500rem; font-weight: 600; line-height: 3.300rem; text-align: center; }
.badge { position: absolute; left: 2rem; top: -.3rem; width: 1.800rem; height: 1.800rem; border-radius: 50%; background: #00d168; color: #fff; font-size: 1.100rem; font-weight: 700; line-height: 1.800rem; }

.filters { height: 6.400rem; display: grid; grid-template-columns: 18.500rem 20.500rem 20.050rem 21.020rem 20.930rem 19.920rem 1fr; }
.filter { border-top: .1rem solid #e5edf4; border-right: .1rem solid #e5edf4; padding-top: 1.400rem; }
.filter.active { background: #081e30; border-color: #081e30; padding: 1.300rem 2rem 0 2.050rem; }
.filter.when { padding-left: 1.580rem; padding-right: 1.600rem; }
.filter.where { padding-left: 1.720rem; padding-right: 1.800rem; }
.filter.exp { padding-left: 1.480rem; padding-right: 1.600rem; }
.filter.spec { padding-left: 1.760rem; padding-right: 1.800rem; }
.filter.pay { padding-left: 1.900rem; padding-right: 2.750rem; }
.filter-label { display: block; font-size: .980rem; line-height: 1.200rem; font-weight: 500; color: #7592aa; letter-spacing: .036em; }
.when .filter-label { letter-spacing: .02em; }
.exp .filter-label { letter-spacing: .056em; }
.filter-value { display: flex; justify-content: space-between; align-items: center; margin-top: .5rem; font-size: 1.250rem; line-height: 1.800rem; font-weight: 500; color: #000; }
.active .filter-value { color: #00d168; margin-top: .6rem; letter-spacing: -.012em; }
.when .filter-value { letter-spacing: -.0145em; }
.exp .filter-value { letter-spacing: .008em; }
.spec .filter-value { letter-spacing: -.005em; }
.pay .filter-value { letter-spacing: .013em; }
.chev { width: 1rem; height: .64rem; color: #1c2f45; }
.when .chev { position: relative; top: .2rem; }
.active .chev { color: #fff; }
.save { border-top: .1rem solid #e5edf4; display: flex; align-items: center; padding: 0 0 .15rem 4.500rem; font-size: 1.260rem; font-weight: 500; letter-spacing: -.013em; color: #19d675; }

.main { flex: 1; display: flex; min-height: 0; }
.results { width: 52.400rem; background: #f5f6f8; padding: 3.200rem 2.600rem 0; display: flex; flex-direction: column; }
.results-head { height: 3.900rem; display: flex; justify-content: space-between; align-items: flex-start; }
.results-title { font-size: 2.150rem; line-height: 2.600rem; color: #000; letter-spacing: -.0125em; }
.sort { display: flex; align-items: center; gap: 1.050rem; line-height: 2.500rem; font-size: 1.170rem; color: #000; letter-spacing: -.0115em; }
.sort b { font-weight: 600; letter-spacing: -.003em; }
.sort .chev { color: #000; margin-top: .1rem; }
.job { height: 16rem; flex: none; margin-bottom: 1.800rem; border-radius: 1.200rem; background: #fff; box-shadow: 0 .2rem .8rem rgba(10,30,50,.09); }
.job-top { height: 7.950rem; border-bottom: .1rem solid #dfe6ec; display: flex; justify-content: space-between; padding: 1.950rem 1.900rem 0 2rem; }
.eyebrow { font-size: .98rem; line-height: 1.400rem; font-weight: 500; color: #7592aa; padding-left: .1rem; letter-spacing: .0485em; }
.dot { display: inline-block; width: 1.650rem; text-align: center; font-style: normal; font-size: .75rem; letter-spacing: 0; }
.job-title { font-size: 1.720rem; line-height: 2.400rem; color: #1d2d42; margin-top: .56rem; letter-spacing: -.01em; }
.featured { display: flex; align-items: center; height: 1.200rem; gap: .6rem; font-size: .980rem; font-weight: 500; letter-spacing: .038em; color: #f9c200; }
.featured .ic-star { width: 1.480rem; height: 1.400rem; margin-bottom: .3rem; }
.job-facts { display: grid; grid-template-columns: 2.230rem 20.800rem 2.150rem 1fr; grid-auto-rows: 2.590rem; align-items: center; padding: 1.480rem 0 0 1.900rem; font-size: 1.140rem; color: #2c4a68; }
.job-facts svg { justify-self: start; margin-bottom: .24rem; color: #c3d0dc; }
.job-facts .ic-cal, .ic-cal { width: 1.240rem; height: 1.400rem; margin-left: .13rem; }
.snug { letter-spacing: -.0165em; }
.ic-pin { width: 1.040rem; height: 1.400rem; margin-left: .22rem; }
.ic-build { width: 1.080rem; height: 1.400rem; }
.ic-dollar { width: .8rem; height: 1.400rem; margin-left: .14rem; }
.hang { margin-left: -.08rem; }
.selected { background: #081e30; }
.selected .job-top { border-color: #263b4d; }
.selected .job-title { color: #00d168; }
.selected .job-facts { color: #b9cbdb; }
.selected .job-facts svg { color: #344c61; }
.plain .job-top { padding-left: 2.080rem; }
.pages { display: flex; align-items: center; margin-top: auto; height: 2rem; margin-bottom: 2.650rem; margin-left: 10.350rem; font-size: 1.150rem; font-weight: 600; color: #b9c5d9; }
.pages span { width: 2rem; height: 2rem; line-height: 2.100rem; margin-right: .66rem; text-align: center; border-radius: 50%; }
.pages .current { background: #000; color: #fff; }
.pg-arrow { width: .6rem; height: 1rem; color: #6b809c; margin-right: 1.100rem; margin-bottom: .1rem; }
.pg-arrow.next { margin-left: 1.400rem; }

.map-area { position: relative; flex: 1; overflow: hidden; padding: 1.500rem; }
.map { position: absolute; inset: 0; width: 100%; height: 100%; }
.map defs path, .highways path, .highways ellipse, .trail, .rail, .paths, .pier, .islet { vector-effect: non-scaling-stroke; fill: none; stroke-linecap: round; stroke-linejoin: round; }
.pc { stroke: #d2dcec; stroke-width: 11px; }
.pr { stroke: #fafafc; stroke-width: 5.500px; }
.casing { stroke: #ccd7ea; stroke-width: 11.500px; }
.road { stroke: #fafafc; stroke-width: 5.800px; }
.park { fill: #c2edd0; }
.water { fill: #92b7fb; }
.trail { stroke: #8fb5fb; stroke-width: 4px; stroke-dasharray: 14 8; }
.rail { stroke: #d0dce7; stroke-width: 9px; }
.paths { stroke: #d8f4e0; stroke-width: 4px; }
.pier { stroke: #e3eaf3; stroke-width: 7px; }
.islet { stroke: #86d798; stroke-width: 4px; }
.islet.dashed { stroke-dasharray: 12 8; }
.highways path { stroke-linecap: butt; }
.h-edge { stroke: #f6c37a; stroke-width: 18px; }
.h-fill { stroke: #fee7ae; stroke-width: 11px; }
.h-edge.wide { stroke-width: 23px; }
.h-fill.wide { stroke-width: 15px; }
.h-edge.slim { stroke-width: 13px; }
.h-fill.slim { stroke-width: 8px; }
.h-mid { stroke: #f8cf8c; stroke-width: 2px; }
.h-edge.broad, .h-edge.huge { stroke: #f8c888; stroke-width: 48px; }
.h-lanes { stroke: #fee1a0; stroke-width: 7px; }
.h-ring { stroke: #f9cf86; stroke-width: 8px; }
.tunnel { stroke: #e8d3da; stroke-width: 11px; }

.detail { position: relative; width: 41.900rem; height: 86.600rem; background: #fff; border-radius: 1.200rem; box-shadow: 0 .4rem 2.200rem rgba(10,30,50,.16); padding: 2.300rem 1.700rem 0 2rem; }
.d-type { font-size: 1.170rem; line-height: 1.600rem; color: #7289a0; padding-left: .24rem; letter-spacing: -.018em; }
.d-title { font-size: 2.100rem; line-height: 2.600rem; margin-top: .5rem; color: #081e30; padding-left: .2rem; letter-spacing: -.0185em; }
.d-pay { font-size: 1.480rem; line-height: 2rem; margin-top: .55rem; color: #000; font-weight: 500; padding-left: .15rem; letter-spacing: .012em; }
.d-facts { list-style: none; margin-top: 2.040rem; font-size: 1.350rem; color: #33536f; letter-spacing: -.0205em; }
.d-facts li { display: grid; grid-template-columns: 2.570rem 1fr; align-items: center; height: 3.200rem; }
.d-facts li.tight { margin-top: -.2rem; }
.d-facts .snug { letter-spacing: -.035em; }
.d-facts svg { color: #c8d2dc; margin-bottom: .28rem; }
.d-facts .ic-cal { margin-left: .24rem; }
.d-facts .ic-pin { margin-left: .34rem; }
.d-facts .ic-card { width: 1.600rem; height: 1.240rem; }
.ic-card { margin-left: .1rem; }
.d-facts .ic-star { width: 1.500rem; height: 1.420rem; margin-left: .14rem; }
.d-actions { display: grid; grid-template-columns: 33.400rem 3.600rem; column-gap: 1.200rem; row-gap: 1.200rem; margin-top: 3.010rem; font-size: 1.350rem; font-weight: 500; }
.btn { display: flex; align-items: center; justify-content: center; height: 3.600rem; border-radius: .6rem; }
.apply { background: #00d168; color: #fff; padding-left: 1.700rem; letter-spacing: -.013em; box-shadow: 0 .1rem .3rem rgba(0,0,0,.06); }
.fav { background: #dbe1e6; box-shadow: 0 .3rem .6rem rgba(0,0,0,.06); }
.ic-heart { width: 1.440rem; height: 1.240rem; color: #8fa5b5; margin-bottom: .1rem; }
.share { grid-column: span 2; height: 3.700rem; background: #f4f4f4; color: #081e30; gap: .95rem; padding: 0 .2rem .05rem 0; box-shadow: 0 .1rem .3rem rgba(0,0,0,.04); }
.ic-share { width: 1.400rem; height: 1.220rem; color: #adbdc9; margin-bottom: .1rem; }
.d-text { margin-top: 2.200rem; font-size: 1.320rem; line-height: 2rem; color: #62707b; letter-spacing: -.0105em; }
.d-text .fade { margin-top: 2rem; background: linear-gradient(#a5adb3, #e0e2e4); -webkit-background-clip: text; background-clip: text; color: transparent; }
.d-more { display: block; text-align: center; padding-right: .3rem; margin-top: 2.500rem; line-height: 2rem; font-size: 1.320rem; font-weight: 500; letter-spacing: .0066em; color: #00d168; }

.collapse { position: absolute; left: 44.500rem; top: 1.500rem; width: 3.200rem; height: 3.200rem; border: 0; border-radius: .5rem; background: #fff; color: #081e30; }
.collapse svg { width: .6rem; height: 1rem; margin: -.1rem 0 0 1.230rem; }
.zoomer { position: absolute; left: 79.400rem; top: 1.500rem; width: 3.200rem; height: 6.300rem; border-radius: .5rem; background: linear-gradient(#e2e2e2, #e2e2e2) .3rem 3.150rem / 2.600rem .1rem no-repeat #fff; }
.plus, .minus, .plus::after { position: absolute; width: 1.300rem; height: .16rem; background: #202428; border-radius: .1rem; }
.plus { left: .95rem; top: 1.450rem; }
.plus::after { content: ""; inset: 0; transform: rotate(90deg); }
.minus { left: .95rem; top: 4.760rem; }
.pin { position: absolute; width: 4.400rem; height: 2.500rem; border-radius: .6rem; background: #000; color: #fff; font-size: 1.230rem; font-weight: 600; line-height: 2.500rem; text-align: center; letter-spacing: -.025em; }
.pin::after { content: ""; position: absolute; left: 1.570rem; top: 2.480rem; width: 1.260rem; height: .56rem; background: #000; clip-path: polygon(0 0, 100% 0, 58% 90%, 50% 100%, 42% 90%); }
.tip { position: absolute; left: 51.900rem; top: 31.200rem; width: 26.700rem; height: 6.900rem; border-radius: 1.200rem; background: #fff; box-shadow: 0 .4rem 1.600rem rgba(10,30,50,.14); padding: 1.550rem 1.850rem 0; }
.tip .job-title { margin-top: .3rem; }
.tip .eyebrow { padding-left: 0; }
```
